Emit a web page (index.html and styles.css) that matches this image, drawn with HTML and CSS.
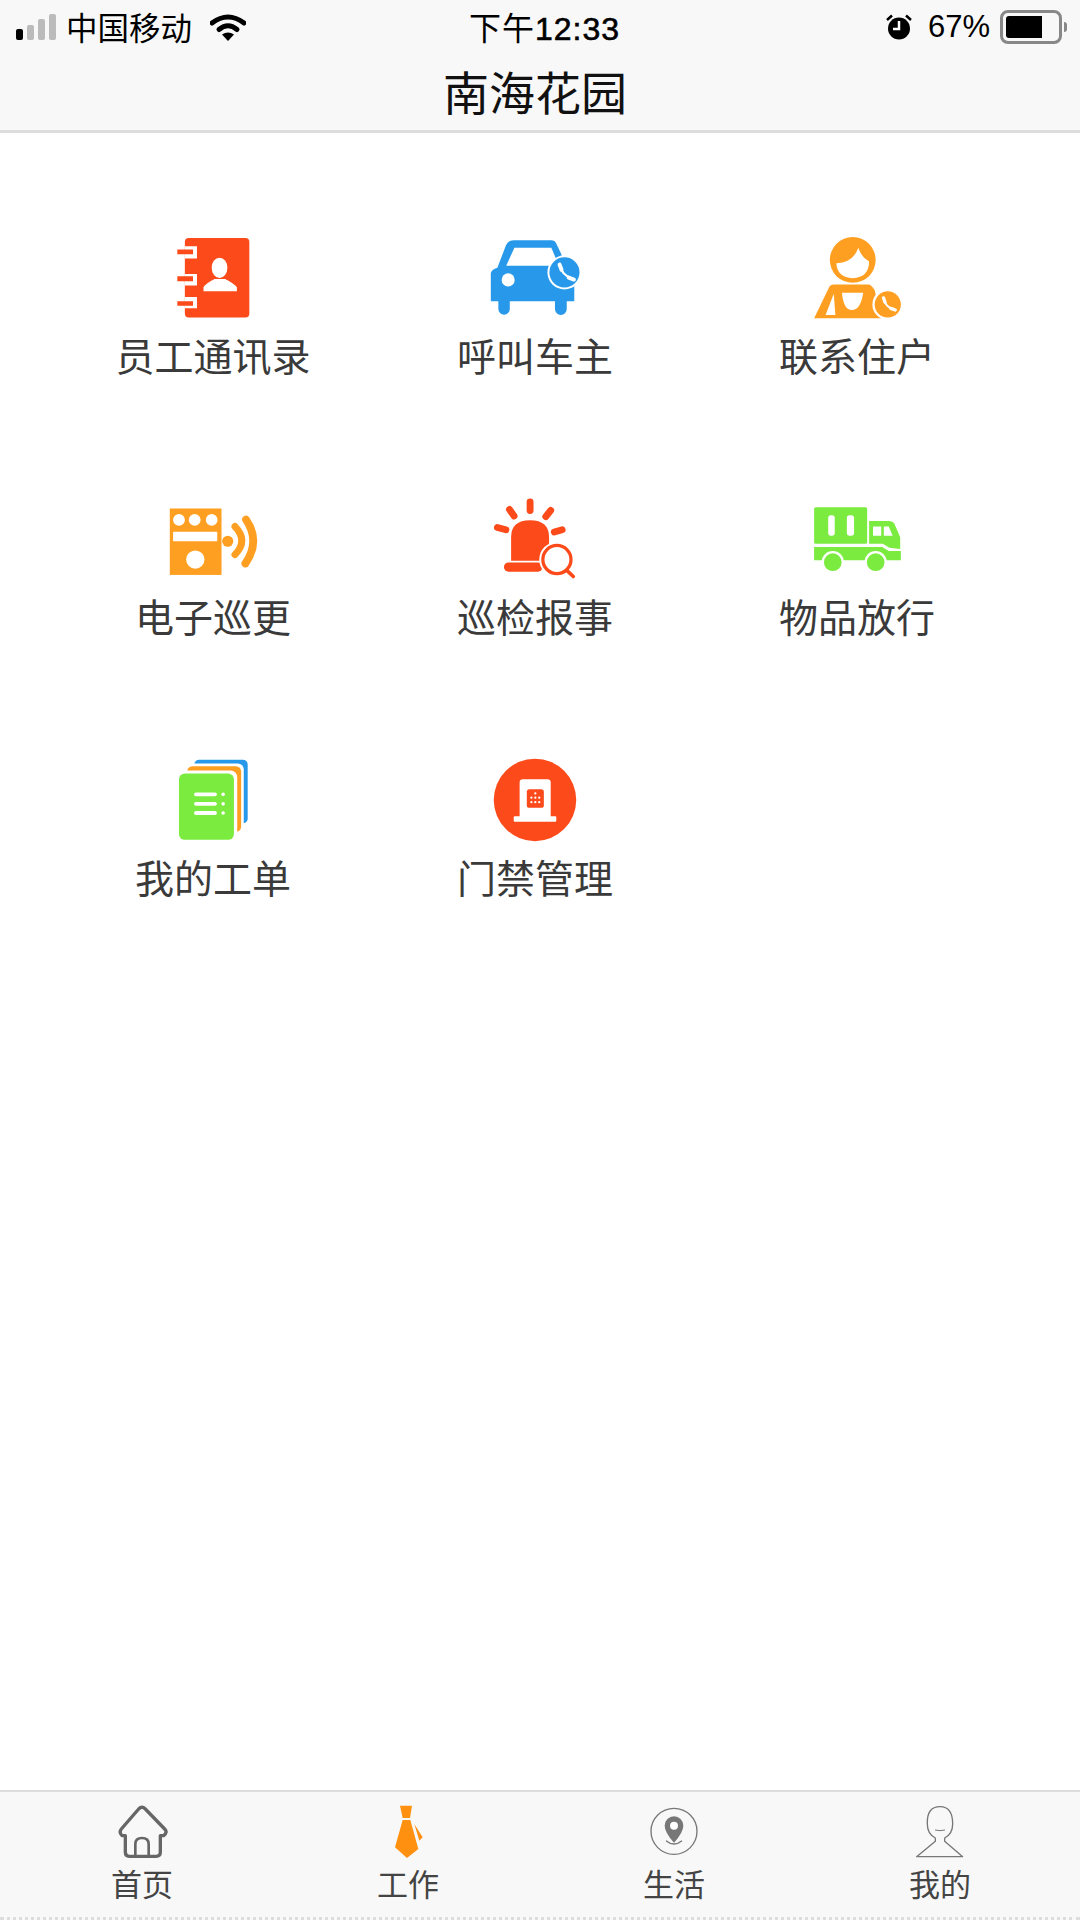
FILE: index.html
```html
<!DOCTYPE html>
<html lang="zh-CN">
<head>
<meta charset="UTF-8" />
<meta name="viewport" content="width=device-width, initial-scale=1" />
<title>南海花园</title>
<link rel="stylesheet" href="styles.css">
</head>
<body>
  <div class="page">
    <div class="status-bar">
      <div class="status-left">
        <div class="signal">
          <span class="bar bar-on bar-1"></span>
          <span class="bar bar-2"></span>
          <span class="bar bar-3"></span>
          <span class="bar bar-4"></span>
        </div>
        <span class="carrier">中国移动</span>
        <svg class="wifi" viewBox="0 0 36 27">
          <path d="M2 9Q18 -3 34 9" fill="none" stroke="#000" stroke-width="5" stroke-linecap="round"/>
          <path d="M9 15.5Q18 8 27 15.5" fill="none" stroke="#000" stroke-width="5" stroke-linecap="round"/>
          <path d="M12 20.5Q18 16.5 24 20.5L18 27Z" fill="#000"/>
        </svg>
      </div>
      <div class="status-time">下午<span class="time-digits">12:33</span></div>
      <div class="status-right">
        <svg class="alarm" viewBox="0 0 26 26">
          <circle cx="13" cy="14.500" r="11" fill="#000"/>
          <path d="M1 6L6 1.500M25 6L20 1.500" stroke="#000" stroke-width="2.500"/>
          <path d="M13 7V15H7" fill="none" stroke="#fff" stroke-width="2.500"/>
        </svg>
        <span class="battery-pct">67%</span>
        <div class="battery"><div class="battery-fill"></div></div>
        <div class="battery-tip"></div>
      </div>
    </div>

    <div class="title-bar">南海花园</div>

    <div class="menu-grid">
      <div class="menu-item">
        <svg class="menu-icon" viewBox="-6 0 390 330">
          <rect x="103" y="55" width="197" height="243" rx="12" fill="#fc4a1a"/>
          <path d="M103 80H140V118H103ZM103 165H140V200H103ZM103 235H140V270H103Z" fill="#fff"/>
          <path d="M80 90H128V105H80ZM80 172H128V187H80ZM80 248H128V262H80Z" fill="#fc4a1a"/>
          <ellipse cx="209" cy="146" rx="24" ry="31" fill="#fff"/>
          <path d="M160 218V206Q165 194 194 180H226Q255 194 262 206V218Z" fill="#fff"/>
        </svg>
        <div class="menu-label">员工通讯录</div>
      </div>
      <div class="menu-item">
        <svg class="menu-icon" viewBox="0 0 390 330">
          <path d="M60 248V162Q62 152 80 146L106 78Q112 62 130 62H245Q255 62 260 72L285 125L315 200V248Z" fill="#2899ea"/>
          <path d="M107 140L132 85H245L262 125L240 140Z" fill="#fff"/>
          <path d="M83 245H118V272A17 17 0 0 1 83 272ZM256 245H292V272A18 18 0 0 1 256 272Z" fill="#2899ea"/>
          <circle cx="113" cy="183" r="20" fill="#fff"/>
          <circle cx="285" cy="160" r="52" fill="#fff"/>
          <circle cx="285" cy="160" r="46" fill="#2899ea"/>
          <path d="M274 142Q276 166 306 178" fill="none" stroke="#fff" stroke-width="7"/>
          <path d="M270 136L276 152M298 176L314 182" fill="none" stroke="#fff" stroke-width="12" stroke-linecap="round"/>
        </svg>
        <div class="menu-label">呼叫车主</div>
      </div>
      <div class="menu-item">
        <svg class="menu-icon" viewBox="6 0 390 330">
          <circle cx="188" cy="122" r="70" fill="#ff9f22"/>
          <path d="M138 132Q190 130 205 85Q215 115 238 127Q238 175 188 178Q140 175 138 132Z" fill="#fff"/>
          <path d="M70 300L115 207Q120 197 130 197H235Q245 197 255 215L275 300Z" fill="#ff9f22"/>
          <path d="M130 225L105 290H135ZM155 222Q160 275 185 275Q212 275 220 222Z" fill="#fff"/>
          <circle cx="295" cy="258" r="47" fill="#fff"/>
          <circle cx="295" cy="258" r="40" fill="#ff9f22"/>
          <path d="M285 244Q287 264 312 273" fill="none" stroke="#fff" stroke-width="6"/>
          <path d="M282 238L287 252M304 270L318 275" fill="none" stroke="#fff" stroke-width="10" stroke-linecap="round"/>
        </svg>
        <div class="menu-label">联系住户</div>
      </div>

      <div class="menu-item">
        <svg class="menu-icon" viewBox="-6 -12 390 330">
          <rect x="57" y="72" width="158" height="203" fill="#ff9f22"/>
          <circle cx="85" cy="107" r="18" fill="#fff"/>
          <circle cx="133" cy="107" r="18" fill="#fff"/>
          <circle cx="185" cy="107" r="18" fill="#fff"/>
          <rect x="67" y="143" width="135" height="29" rx="2" fill="#fff"/>
          <circle cx="135" cy="228" r="28" fill="#fff"/>
          <circle cx="234" cy="172" r="17" fill="#ff9f22"/>
          <path d="M256 127Q298 170 256 213" fill="none" stroke="#ff9f22" stroke-width="21" stroke-linecap="round"/>
          <path d="M290 106Q335 172 288 240" fill="none" stroke="#ff9f22" stroke-width="24" stroke-linecap="round"/>
        </svg>
        <div class="menu-label">电子巡更</div>
      </div>
      <div class="menu-item">
        <svg class="menu-icon" viewBox="0 -12 390 330">
          <path d="M122 232V160Q122 108 180 108Q238 108 238 160V232Z" fill="#fc4a1a"/>
          <rect x="100" y="237" width="118" height="28" rx="14" fill="#fc4a1a"/>
          <path d="M180 52V78M117 75L131 95M243 78L228 97M80 130L106 137M254 144L278 137" stroke="#fc4a1a" stroke-width="21" stroke-linecap="round"/>
          <circle cx="262" cy="228" r="54" fill="#fff"/>
          <circle cx="262" cy="228" r="43" fill="#fff" stroke="#fc4a1a" stroke-width="10"/>
          <path d="M293 262L312 280" stroke="#fc4a1a" stroke-width="11" stroke-linecap="round"/>
        </svg>
        <div class="menu-label">巡检报事</div>
      </div>
      <div class="menu-item">
        <svg class="menu-icon" viewBox="6 -12 390 330">
          <rect x="70" y="68" width="162" height="112" rx="5" fill="#7beb3f"/>
          <rect x="113" y="93" width="20" height="62" rx="8" fill="#fff"/>
          <rect x="170" y="93" width="22" height="62" rx="8" fill="#fff"/>
          <path d="M238 110H300Q310 110 315 118L333 160V196L300 192L280 180H238Z" fill="#7beb3f"/>
          <path d="M250 127H275V155H250ZM283 127H298L310 155H283Z" fill="#fff"/>
          <path d="M70 190H278L298 202H335V230H70Z" fill="#7beb3f"/>
          <circle cx="127" cy="236" r="34" fill="#fff"/>
          <circle cx="258" cy="236" r="34" fill="#fff"/>
          <circle cx="127" cy="236" r="27" fill="#7beb3f"/>
          <circle cx="258" cy="236" r="27" fill="#7beb3f"/>
        </svg>
        <div class="menu-label">物品放行</div>
      </div>

      <div class="menu-item">
        <svg class="menu-icon" viewBox="-6 -9 390 330">
          <rect x="132" y="45" width="163" height="195" rx="15" fill="#2899ea"/>
          <rect x="103" y="57" width="180" height="216" rx="18" fill="#fff"/>
          <rect x="110" y="65" width="165" height="200" rx="16" fill="#ff9f22"/>
          <rect x="76" y="78" width="187" height="220" rx="20" fill="#fff"/>
          <rect x="85" y="87" width="168" height="203" rx="18" fill="#7beb3f"/>
          <path d="M137 151H195M137 180H195M137 208H195" stroke="#fff" stroke-width="12" stroke-linecap="round"/>
          <circle cx="220" cy="151" r="5.500" fill="#fff"/>
          <circle cx="220" cy="180" r="5.500" fill="#fff"/>
          <circle cx="220" cy="208" r="5.500" fill="#fff"/>
        </svg>
        <div class="menu-label">我的工单</div>
      </div>
      <div class="menu-item">
        <svg class="menu-icon" viewBox="0 -9 390 330">
          <circle cx="195" cy="168" r="126" fill="#fc4a1a"/>
          <path d="M148 222V115Q148 105 158 105H233Q243 105 243 115V222Z" fill="#fff"/>
          <rect x="130" y="218" width="130" height="17" rx="3" fill="#fff"/>
          <rect x="170" y="135" width="52" height="57" rx="8" fill="#fc4a1a"/>
          <g fill="#fff">
            <circle cx="196" cy="148" r="3.500"/>
            <circle cx="184" cy="161" r="3.500"/><circle cx="196" cy="161" r="3.500"/><circle cx="208" cy="161" r="3.500"/>
            <circle cx="184" cy="175" r="3.500"/><circle cx="196" cy="175" r="3.500"/><circle cx="208" cy="175" r="3.500"/>
          </g>
        </svg>
        <div class="menu-label">门禁管理</div>
      </div>
    </div>

    <div class="tab-bar">
      <div class="tab">
        <svg class="tab-icon" viewBox="323 70 174 162">
          <path d="M360 165H350Q340 155 348 145L400 85Q410 75 420 85L478 145Q488 155 475 165H465V215Q465 227 452 227H372Q360 227 360 215Z" fill="none" stroke="#666" stroke-width="10" stroke-linejoin="round"/>
          <path d="M390 227V190Q390 172 410 172Q430 172 430 190V227" fill="none" stroke="#666" stroke-width="8"/>
        </svg>
        <div class="tab-label">首页</div>
      </div>
      <div class="tab">
        <svg class="tab-icon" viewBox="1094 70 174 162">
          <path d="M1157 75H1193L1187 112H1165ZM1165 118H1188L1212 205L1178 232L1142 200ZM1200 130L1225 170L1215 180Z" fill="#ff9010"/>
        </svg>
        <div class="tab-label">工作</div>
      </div>
      <div class="tab">
        <svg class="tab-icon" viewBox="301 70 174 162">
          <circle cx="388" cy="152" r="69" fill="none" stroke="#777" stroke-width="4"/>
          <path d="M360 135A28 28 0 0 1 416 135Q416 155 388 186Q360 155 360 135Z" fill="#777"/>
          <circle cx="388" cy="135" r="12" fill="#fff"/>
          <path d="M364 180Q388 200 412 180" fill="none" stroke="#777" stroke-width="4"/>
        </svg>
        <div class="tab-label">生活</div>
      </div>
      <div class="tab">
        <svg class="tab-icon" viewBox="1073 70 174 162">
          <path d="M1122 130Q1120 78 1160 78Q1198 78 1198 130Q1198 160 1174 172V182L1228 228H1090L1146 182V172Q1122 160 1122 130Z" fill="none" stroke="#777" stroke-width="4" stroke-linejoin="round"/>
          <path d="M1145 148Q1160 152 1175 148" fill="none" stroke="#777" stroke-width="3"/>
        </svg>
        <div class="tab-label">我的</div>
      </div>
    </div>
  </div>
</body>
</html>
```

FILE: styles.css
```css
body {
  margin: 0;
  background: white;
  font-family: "Liberation Sans", "Noto Sans CJK SC", sans-serif;
}
.page {
  height: 1920px;
  display: flex;
  flex-direction: column;
}

.status-bar {
  height: 54px;
  padding: 0 13px 0 16px;
  background: #f8f8f8;
  color: #000;
  display: grid;
  grid-template-columns: 1fr auto 1fr;
  align-items: center;
  font-size: 31px;
}
.status-left {
  display: flex;
  align-items: center;
}
.signal {
  display: flex;
  align-items: flex-end;
  gap: 4px;
  height: 26px;
  margin-right: 10px;
}
.bar {
  width: 7px;
  border-radius: 2px;
  background: #bbb;
}
.bar-on { background: #000; }
.bar-1 { height: 11px; }
.bar-2 { height: 15px; }
.bar-3 { height: 21px; }
.bar-4 { height: 26px; }
.carrier {
  margin-bottom: 3px;
  font-size: 31.5px;
}
.wifi {
  width: 36px;
  height: 27px;
  margin-left: 18px;
}
.status-time {
  margin: 0 0 3px 6px;
  font-size: 32px;
  letter-spacing: 1px;
}
.time-digits {
  -webkit-text-stroke: 0.6px #000;
}
.status-right {
  display: flex;
  align-items: center;
  justify-content: flex-end;
}
.alarm {
  width: 26px;
  height: 26px;
  margin-right: 16px;
}
.battery-pct {
  margin-right: 10px;
}
.battery {
  width: 50px;
  height: 22px;
  padding: 3px;
  border: 3px solid #888;
  border-radius: 8px;
  margin-right: 2px;
}
.battery-fill {
  width: 36px;
  height: 22px;
  border-radius: 3px 0 0 3px;
  background: #000;
}
.battery-tip {
  width: 3px;
  height: 10px;
  border-radius: 0 3px 3px 0;
  background: #888;
}

.title-bar {
  height: 72px;
  padding: 4px 10px 0 0;
  background: #f8f8f8;
  border-bottom: 3px solid #ddd;
  color: #111;
  font-size: 46px;
  line-height: 72px;
  text-align: center;
}

.menu-grid {
  flex: 1;
  padding: 87px 0 0 52px;
  display: grid;
  grid-template-columns: repeat(3, 322px);
  grid-auto-rows: 160px;
  row-gap: 101px;
  align-content: start;
}
.menu-item {
  display: flex;
  flex-direction: column;
  align-items: center;
}
.menu-icon {
  display: block;
  width: 134px;
  height: 113px;
}
.menu-label {
  margin-top: 8px;
  color: #3a3a3a;
  font-size: 39px;
  line-height: 44px;
}

.tab-bar {
  height: 125px;
  padding: 0 7px 0 9px;
  background: #f8f8f8;
  border-top: 2px solid #ddd;
  border-bottom: 3px dotted #ddd;
  display: grid;
  grid-template-columns: repeat(4, 1fr);
}
.tab {
  padding-top: 12px;
  display: flex;
  flex-direction: column;
  align-items: center;
}
.tab-icon {
  display: block;
  width: 58px;
  height: 54px;
}
.tab-label {
  margin-top: 10px;
  color: #444;
  font-size: 31px;
  line-height: 36px;
}
```
